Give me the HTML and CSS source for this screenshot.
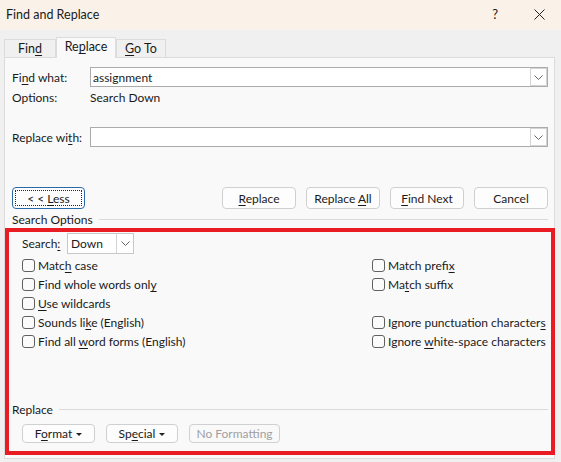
FILE: index.html
```html
<!DOCTYPE html>
<html lang="en">
<head>
    <meta charset="UTF-8">
    <title>Find and Replace</title>
    <link rel="stylesheet" href="styles.css">
</head>
<body>
    <div class="dialog">
        <div class="titlebar">
            <span class="title">Find and Replace</span>
            <div class="title-controls">
                <span class="help">?</span>
                <svg class="close" width="11" height="11" viewBox="0 0 11 11">
                    <path d="M0.5 0.5 L10.5 10.5 M10.5 0.5 L0.5 10.5" stroke="#222" stroke-width="1" fill="none"/>
                </svg>
            </div>
        </div>
        <div class="tabs">
            <div class="tab tab-find"><span>Fin<u>d</u></span></div>
            <div class="tab tab-replace active"><span>Re<u>p</u>lace</span></div>
            <div class="tab tab-goto"><span><u>G</u>o To</span></div>
        </div>
        <div class="panel">
            <div class="field-row">
                <label class="field-label">Fi<u>n</u>d what:</label>
                <div class="combo">
                    <span class="combo-text">assignment</span>
                    <span class="combo-btn">
                        <svg width="9" height="5" viewBox="0 0 9 5"><polyline points="0.5,0.5 4.5,4.5 8.5,0.5" stroke="#666" fill="none"/></svg>
                    </span>
                </div>
            </div>
            <div class="info-row">
                <span class="field-label">Options:</span>
                <span>Search Down</span>
            </div>
            <div class="field-row replace-row">
                <label class="field-label">Replace wi<u>t</u>h:</label>
                <div class="combo">
                    <span class="combo-text"></span>
                    <span class="combo-btn">
                        <svg width="9" height="5" viewBox="0 0 9 5"><polyline points="0.5,0.5 4.5,4.5 8.5,0.5" stroke="#666" fill="none"/></svg>
                    </span>
                </div>
            </div>
            <div class="button-row">
                <button class="btn btn-less">&lt; &lt; <u>L</u>ess</button>
                <div class="actions">
                    <button class="btn"><u>R</u>eplace</button>
                    <button class="btn">Replace <u>A</u>ll</button>
                    <button class="btn"><u>F</u>ind Next</button>
                    <button class="btn">Cancel</button>
                </div>
            </div>
            <div class="group-head">
                <span>Search Options</span>
                <div class="rule"></div>
            </div>
            <div class="search-row">
                <span class="search-label">Search<u>:</u></span>
                <div class="select">
                    <span class="select-text">Down</span>
                    <span class="select-btn">
                        <svg width="9" height="5" viewBox="0 0 9 5"><polyline points="0.5,0.5 4.5,4.5 8.5,0.5" stroke="#666" fill="none"/></svg>
                    </span>
                </div>
            </div>
            <div class="checks">
                <div class="check"><span class="box"></span><span>Matc<u>h</u> case</span></div>
                <div class="check"><span class="box"></span><span>Match prefi<u>x</u></span></div>
                <div class="check"><span class="box"></span><span>Find whole words onl<u>y</u></span></div>
                <div class="check"><span class="box"></span><span>Ma<u>t</u>ch suffix</span></div>
                <div class="check"><span class="box"></span><span><u>U</u>se wildcards</span></div>
                <div class="check"></div>
                <div class="check"><span class="box"></span><span>Sounds li<u>k</u>e (English)</span></div>
                <div class="check"><span class="box"></span><span>Ignore punctuation character<u>s</u></span></div>
                <div class="check"><span class="box"></span><span>Find all <u>w</u>ord forms (English)</span></div>
                <div class="check"><span class="box"></span><span>Ignore <u>w</u>hite-space characters</span></div>
            </div>
            <div class="group-head replace-head">
                <span>Replace</span>
                <div class="rule"></div>
            </div>
            <div class="format-row">
                <button class="btn btn-small btn-format">F<u>o</u>rmat <span class="caret"></span></button>
                <button class="btn btn-small btn-special">Sp<u>e</u>cial <span class="caret"></span></button>
                <button class="btn btn-small btn-noformat" disabled>No Formatting</button>
            </div>
        </div>
        <div class="highlight"></div>
    </div>
</body>
</html>
```

FILE: styles.css
```css
body {
    margin: 0;
    font-family: Lato, "Noto Sans", sans-serif;
    font-size: 12px;
    color: #1a1a1a;
}
u {
    text-decoration-thickness: 1px;
    text-underline-offset: 2px;
}
.dialog {
    position: relative;
    width: 561px;
    height: 462px;
    background: #f0f0f0;
    overflow: hidden;
}
.titlebar {
    height: 30px;
    background: #faf2e8;
    display: flex;
    align-items: center;
    justify-content: space-between;
    padding: 0 16px 0 6px;
}
.title {
    font-size: 12.5px;
    margin-top: -2px;
}
.title-controls {
    display: flex;
    align-items: center;
    gap: 36px;
}
.help {
    font-size: 13px;
    margin-top: -3px;
}
.close {
    margin-top: -2px;
}
.tabs {
    height: 27px;
    display: flex;
    align-items: flex-end;
    padding-left: 4px;
}
.tab {
    height: 18px;
    border: 1px solid #dcdcdc;
    border-bottom: none;
    background: #f0f0f0;
    display: flex;
    align-items: center;
    justify-content: center;
    box-sizing: border-box;
    font-size: 12.5px;
}
.tab-find {
    width: 52px;
}
.tab-replace {
    width: 60px;
}
.tab-goto {
    width: 50px;
}
.tab.active {
    height: 21px;
    margin-bottom: -1px;
    background: #f9f9f9;
    padding-bottom: 3px;
    position: relative;
    z-index: 1;
}
.panel {
    margin-left: 4px;
    width: 551px;
    height: 402px;
    box-sizing: border-box;
    border: 1px solid #dcdcdc;
    background: #f9f9f9;
    padding: 9px 6px 0 7px;
}
.field-row {
    display: flex;
    align-items: center;
    height: 20px;
}
.field-label {
    width: 78px;
    flex-shrink: 0;
}
.combo {
    flex: 1;
    height: 20px;
    box-sizing: border-box;
    border: 1px solid #ababab;
    background: #fff;
    display: flex;
    align-items: center;
    justify-content: space-between;
}
.combo-text {
    padding-left: 2px;
}
.combo-btn {
    width: 17px;
    height: 18px;
    box-sizing: border-box;
    border: 1px solid #d4d4d4;
    display: flex;
    align-items: center;
    justify-content: center;
}
.info-row {
    display: flex;
    align-items: center;
    height: 16px;
    margin-top: 2px;
}
.replace-row {
    margin-top: 22px;
}
.button-row {
    display: flex;
    justify-content: space-between;
    margin-top: 40px;
}
.actions {
    display: flex;
    gap: 10px;
}
.btn {
    font-family: inherit;
    font-size: 12px;
    color: #1a1a1a;
    width: 74px;
    height: 22px;
    padding: 0;
    box-sizing: border-box;
    border: 1px solid #d0d0d0;
    border-radius: 4px;
    background: #fdfdfd;
}
.btn-less {
    width: 73px;
    border-color: #2b6aa8;
    outline: 1px dotted #222;
    outline-offset: -4px;
}
.group-head {
    display: flex;
    align-items: center;
    height: 16px;
    margin-top: 2px;
    gap: 6px;
}
.rule {
    flex: 1;
    height: 1px;
    background: #dadada;
}
.search-row {
    display: flex;
    align-items: center;
    margin-top: 6px;
    padding-left: 10px;
}
.search-label {
    width: 45px;
}
.select {
    width: 67px;
    height: 21px;
    box-sizing: border-box;
    border: 1px solid #c8c8c8;
    background: #fff;
    display: flex;
    align-items: center;
    justify-content: space-between;
}
.select-text {
    padding-left: 3px;
}
.select-btn {
    width: 17px;
    height: 19px;
    box-sizing: border-box;
    border-left: 1px solid #d4d4d4;
    display: flex;
    align-items: center;
    justify-content: center;
}
.checks {
    display: grid;
    grid-template-columns: 350px auto;
    grid-auto-rows: 19px;
    margin-top: 2px;
    padding-left: 10px;
}
.check {
    display: flex;
    align-items: center;
    gap: 3px;
    white-space: nowrap;
}
.box {
    width: 13px;
    height: 13px;
    box-sizing: border-box;
    border: 1px solid #606060;
    border-radius: 3px;
    background: #fbfbfb;
    flex-shrink: 0;
}
.replace-head {
    margin-top: 50px;
}
.format-row {
    display: flex;
    gap: 11px;
    margin-top: 7px;
    padding-left: 10px;
}
.btn-small {
    height: 19px;
    line-height: 17px;
}
.btn-format {
    width: 73px;
}
.btn-special {
    width: 72px;
}
.btn-noformat {
    width: 91px;
    color: #a0a0a0;
    background: #f9f9f9;
}
.caret {
    display: inline-block;
    width: 0;
    height: 0;
    border-left: 3px solid transparent;
    border-right: 3px solid transparent;
    border-top: 3px solid #222;
    vertical-align: middle;
    margin-left: 1px;
}
.highlight {
    position: absolute;
    left: 5px;
    top: 228px;
    width: 550px;
    height: 227px;
    box-sizing: border-box;
    border: 4px solid #e91c24;
    pointer-events: none;
}
```
